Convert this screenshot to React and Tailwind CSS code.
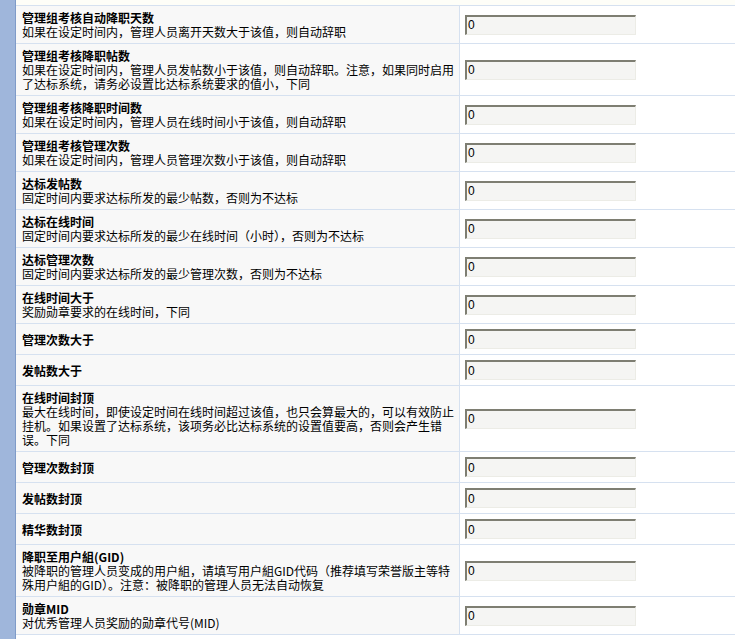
import React from "react";

const rows = [
  { t: "管理组考核自动降职天数", d: ["如果在设定时间内，管理人员离开天数大于该值，则自动辞职"] },
  { t: "管理组考核降职帖数", d: ["如果在设定时间内，管理人员发帖数小于该值，则自动辞职。注意，如果同时启用", "了达标系统，请务必设置比达标系统要求的值小，下同"] },
  { t: "管理组考核降职时间数", d: ["如果在设定时间内，管理人员在线时间小于该值，则自动辞职"] },
  { t: "管理组考核管理次数", d: ["如果在设定时间内，管理人员管理次数小于该值，则自动辞职"] },
  { t: "达标发帖数", d: ["固定时间内要求达标所发的最少帖数，否则为不达标"] },
  { t: "达标在线时间", d: ["固定时间内要求达标所发的最少在线时间（小时），否则为不达标"] },
  { t: "达标管理次数", d: ["固定时间内要求达标所发的最少管理次数，否则为不达标"] },
  { t: "在线时间大于", d: ["奖励勋章要求的在线时间，下同"] },
  { t: "管理次数大于", d: [] },
  { t: "发帖数大于", d: [] },
  { t: "在线时间封顶", d: ["最大在线时间，即使设定时间在线时间超过该值，也只会算最大的，可以有效防止", "挂机。如果设置了达标系统，该项务必比达标系统的设置值要高，否则会产生错", "误。下同"] },
  { t: "管理次数封顶", d: [] },
  { t: "发帖数封顶", d: [] },
  { t: "精华数封顶", d: [] },
  { t: "降职至用户組(GID)", d: ["被降职的管理人员变成的用户組，请填写用户組GID代码（推荐填写荣誉版主等特", "殊用户組的GID）。注意：被降职的管理人员无法自动恢复"] },
  { t: "勋章MID", d: ["对优秀管理人员奖励的勋章代号(MID)"] },
];

export default function App() {
  return (
    <div
      className="flex w-[735px] h-[639px] overflow-hidden bg-white text-black"
      style={{ fontFamily: '"Noto Sans CJK SC", "Liberation Sans", sans-serif' }}
    >
      <div className="w-[16px] shrink-0 bg-[#9fb6db] border-r border-[#7f9bc8]" />
      <div className="flex-1 flex flex-col">
        <div className="h-[5px] bg-[#fefef8] border-b border-[#d6e1f0] box-content" />
        {rows.map((r, i) => (
          <div key={i} className="flex border-b border-[#d6e1f0]">
            <div className="w-[444px] shrink-0 bg-[#f8f8f8] border-r border-[#d6e1f0] pl-[6px] pt-[5px] pb-[4px] text-[12px] leading-[14px] flex flex-col justify-center whitespace-nowrap">
              <div className="font-bold">{r.t}</div>
              {r.d.map((l, j) => (
                <div key={j}>{l}</div>
              ))}
            </div>
            <div className="flex-1 flex items-center pl-[5px] py-[5px]">
              <div className="w-[171px] h-[20px] bg-[#f5f5f3] border-t-2 border-l-2 border-t-[#7e7e72] border-l-[#7e7e72] border-b border-r border-b-[#ecece6] border-r-[#ecece6] flex items-center pl-[1px] text-[12px] text-black" style={{ fontFamily: '"Liberation Sans", sans-serif' }}>
                0
              </div>
            </div>
          </div>
        ))}
      </div>
    </div>
  );
}
